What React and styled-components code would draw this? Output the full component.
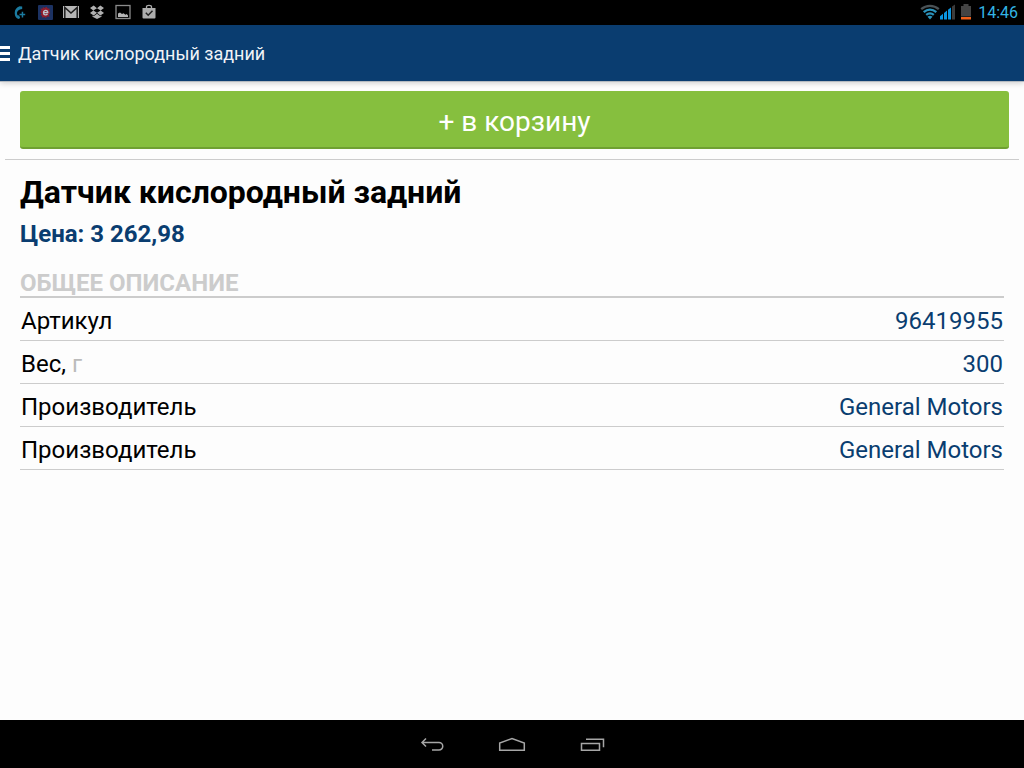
import React from "react";
import styled, { createGlobalStyle } from "styled-components";

const specs = [
  { id: 1, name: "Артикул", value: "96419955" },
  { id: 2, name: "Вес,", unit: "г", value: "300" },
  { id: 3, name: "Производитель", value: "General Motors" },
  { id: 4, name: "Производитель", value: "General Motors" },
];

export default function App() {
  return (
    <>
      <GlobalStyle />
      <Screen>
        <StatusBar>
          <Notifications>
            <CallIcon />
            <AppIcon />
            <MailIcon />
            <DropboxIcon />
            <PictureIcon />
            <StoreIcon />
          </Notifications>
          <Indicators>
            <WifiIcon />
            <SignalIcon />
            <BatteryIcon />
            <time>14:46</time>
          </Indicators>
        </StatusBar>
        <Header>
          <MenuButton type="button" aria-label="Меню">
            <span />
            <span />
            <span />
          </MenuButton>
          <span>Датчик кислородный задний</span>
        </Header>
        <Actions>
          <CartButton type="button">+ в корзину</CartButton>
        </Actions>
        <Product>
          <h1>Датчик кислородный задний</h1>
          <Price>Цена: 3 262,98</Price>
          <SpecTable>
            <caption>ОБЩЕЕ ОПИСАНИЕ</caption>
            <tbody>
              {specs.map(({ id, name, unit, value }) => (
                <tr key={id}>
                  <th scope="row">
                    {name} {unit && <Unit>{unit}</Unit>}
                  </th>
                  <td>{value}</td>
                </tr>
              ))}
            </tbody>
          </SpecTable>
        </Product>
        <NavBar>
          <NavButton type="button" aria-label="Назад">
            <svg width="26" height="16" viewBox="0 0 26 16">
              <path d="M7 2.500L3 6.500l4 4M3 6.500h17a3.500 3.500 0 0 1 0 7.500h-7" />
            </svg>
          </NavButton>
          <NavButton type="button" aria-label="Домой">
            <svg width="28" height="16" viewBox="0 0 28 16">
              <path d="M1.700 14.300V7L14 2.500L26.300 7v7.300z" />
            </svg>
          </NavButton>
          <NavButton type="button" aria-label="Недавние">
            <svg width="26" height="16" viewBox="0 0 26 16">
              <path d="M2.500 7.500h18v6.800h-18zM7 3.300h17.500v8" />
            </svg>
          </NavButton>
        </NavBar>
      </Screen>
    </>
  );
}

function CallIcon() {
  return (
    <svg width="16" height="16" viewBox="0 0 16 16" fill="#1b7ba0">
      <path d="M8.500 2.200l2.700.2v2.600l-2.200.5C6.700 6.500 6 7.800 6 9.300c0 .8.200 1.400.5 2l1.700.2 1 2.600-1.600.9C5.200 14.500 3.700 12 3.700 9c0-3.500 2-6 4.800-6.800z" />
      <path d="M8.500 9.800h2.200V7.700h1.500v2.100h2v1.500h-2v2.100h-1.500v-2.100H8.500z" />
    </svg>
  );
}

function AppIcon() {
  return (
    <svg width="16" height="16" viewBox="0 0 16 16">
      <rect x="1" y="1" width="15" height="15" rx="1" fill="#1c3262" />
      <path
        d="M3.500 4.500l2 .2.500-1.700 1.500 1 2-1.200 1 1.500 2.300.4-.6 1.800 1 2.500-1.200 1.500.5 2.200-2.200-.2-1.500 1.500-1.500-1-1.800.7-.7-1.900-1.300-.7 1-1.600L3.200 8l1.200-1.400z"
        fill="#8f1c2c"
      />
      <path d="M6 8.700h4.800C10.800 5.700 6.500 5.700 6.500 8.700c0 2.700 2.900 2.500 4 1.300" fill="none" stroke="#bcc3cc" strokeWidth="1.300" />
    </svg>
  );
}

function MailIcon() {
  return (
    <svg width="16" height="16" viewBox="0 0 16 16">
      <rect y="2" width="16" height="12" fill="#b5b5b5" />
      <path d="M1.800 14V3.500L8 9l6.200-5.500V14" fill="none" stroke="#1c1c1c" strokeWidth="1.500" />
    </svg>
  );
}

function DropboxIcon() {
  return (
    <svg width="16" height="16" viewBox="0 0 16 16" fill="#b0b0b0">
      <path d="M4.700 1.500L8 4.200L4.300 6.500L1 3.900zM11.300 1.500L15 3.900l-3.300 2.600L8 4.200zM1 9.100l3.300-2.600L8 8.800l-3.300 2.600zM15 9.100l-3.700 2.300L8 8.800l3.700-2.300zM8 9.800l3.300 2.500 1.200-.7v1.100L8 15l-4.500-2.300v-1.100l1.200.7z" />
    </svg>
  );
}

function PictureIcon() {
  return (
    <svg width="16" height="16" viewBox="0 0 16 16">
      <rect x="1" y="1.500" width="14" height="13" fill="none" stroke="#8b8b8b" strokeWidth="1.300" />
      <path d="M3 13V9.500l2-1 2 1.500 1.500-.8 2 1.600 1.200-.7L13 11.500V13z" fill="#b5b5b5" />
    </svg>
  );
}

function StoreIcon() {
  return (
    <svg width="16" height="16" viewBox="0 0 16 16">
      <path d="M5.500 4.500V2.700C5.500.8 10.500.8 10.500 2.700v1.800" fill="none" stroke="#aaa" strokeWidth="1.300" />
      <path d="M1.500 4h13v9.500a1 1 0 0 1-1 1h-11a1 1 0 0 1-1-1z" fill="#adadad" />
      <path d="M4.800 8.800l2.400 2.400 4.300-4.500" fill="none" stroke="#222" strokeWidth="1.500" />
    </svg>
  );
}

function WifiIcon() {
  return (
    <svg width="20" height="16" viewBox="0 0 20 16" fill="none" strokeWidth="2.300">
      <path d="M1.200 5.200C6.300.8 13.700.8 18.800 5.200" stroke="#4a5256" />
      <path d="M3.700 8.100c3.800-3.200 8.800-3.200 12.600 0M6.200 10.900c2.300-1.900 5.300-1.900 7.600 0" stroke="#2b93bb" />
      <path d="M7.500 12.700c1.600-1.200 3.400-1.200 5 0L10 15.500z" fill="#2b93bb" />
    </svg>
  );
}

function SignalIcon() {
  return (
    <svg width="16" height="16" viewBox="0 0 16 16" fill="#0a95e0">
      <path d="M0 12.200l3-2.400V15.500H0zM4 9l3-2.400V15.500H4zM8 5.800l3-2.400V15.500H8z" />
      <path d="M12 2.600L15 .4V15.500h-3z" fill="#3c3c3c" />
    </svg>
  );
}

function BatteryIcon() {
  return (
    <svg width="12" height="16" viewBox="0 0 12 16">
      <path d="M3.500 0h5v2H11v10.500H1V2h2.500z" fill="#444" />
      <path d="M1 13h10v2.500H1z" fill="#f0601a" />
    </svg>
  );
}

const GlobalStyle = createGlobalStyle`
  * {
    box-sizing: border-box;
  }
  body {
    margin: 0;
    background: #fdfdfd;
    font-family: Roboto, "Liberation Sans", sans-serif;
  }
  button {
    border: 0;
    padding: 0;
    font-family: inherit;
    cursor: pointer;
  }
  svg {
    display: block;
  }
`;

const Screen = styled.div`
  min-height: 100vh;
  display: flex;
  flex-direction: column;
`;

const StatusBar = styled.div`
  height: 25px;
  padding: 0 6px 1px 11px;
  display: flex;
  align-items: center;
  justify-content: space-between;
  background: #000;
`;

const Notifications = styled.div`
  display: flex;
  gap: 10px;
`;

const Indicators = styled.div`
  display: flex;
  align-items: center;
  gap: 4px;
  color: #33b5e5;
  font-size: 16px;
  line-height: 22px;
  svg:first-child {
    margin-right: -4px;
  }
  time {
    margin-left: 2px;
    padding-top: 2px;
  }
`;

const Header = styled.header`
  height: 57px;
  display: flex;
  align-items: center;
  gap: 8px;
  background: #0a3d70;
  border-bottom: 1px solid #b4bac0;
  box-shadow: 0 1px 6px rgba(0, 0, 0, 0.2);
  color: #f1f4f7;
  font-size: 18px;
`;

const MenuButton = styled.button`
  width: 10px;
  display: flex;
  flex-direction: column;
  gap: 3px;
  background: none;
  span {
    height: 3px;
    background: #fff;
  }
`;

const Actions = styled.div`
  margin: 0 5px;
  padding: 9px 10px 10px 15px;
  border-bottom: 1px solid #ccc;
`;

const CartButton = styled.button`
  width: 100%;
  height: 58px;
  padding-top: 4px;
  border-bottom: 2px solid #6fa032;
  border-radius: 3px;
  background: #86bf3e;
  color: #fff;
  font-size: 28px;
`;

const Product = styled.main`
  flex: 1;
  padding: 12px 20px;
  h1 {
    margin: 0;
    font-size: 32px;
    line-height: 40px;
    font-weight: 700;
    color: #000;
  }
`;

const Price = styled.p`
  margin: 6px 0 14px;
  color: #0a3d70;
  font-size: 24px;
  line-height: 32px;
  font-weight: 700;
`;

const SpecTable = styled.table`
  width: 100%;
  border-collapse: separate;
  border-spacing: 0;
  font-size: 24px;
  line-height: 32px;
  caption {
    padding-top: 6px;
    border-bottom: 2px solid #ccc;
    color: #ccc;
    line-height: 26px;
    font-weight: 700;
    text-align: left;
  }
  th,
  td {
    height: 43px;
    padding: 4px 1px 0;
    border-bottom: 1px solid #ccc;
  }
  th {
    color: #000;
    font-weight: 400;
    text-align: left;
  }
  td {
    color: #0a3d70;
    text-align: right;
  }
`;

const Unit = styled.span`
  color: #bbb;
`;

const NavBar = styled.nav`
  height: 48px;
  display: flex;
  align-items: center;
  justify-content: center;
  background: #000;
`;

const NavButton = styled.button`
  width: 80px;
  height: 48px;
  display: flex;
  align-items: center;
  justify-content: center;
  background: none;
  svg {
    fill: none;
    stroke: #a6a6a6;
    stroke-width: 1.500;
  }
`;
